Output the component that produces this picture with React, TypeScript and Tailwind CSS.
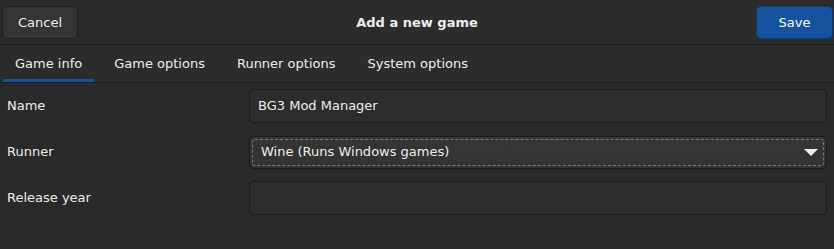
const tabs = ["Game info", "Game options", "Runner options", "System options"]

const App = () => {
  return (
    <div className="w-[834px] h-[249px] bg-[#2a2a2a] text-[#eeeeec] text-[13px] overflow-hidden" style={{ fontFamily: '"DejaVu Sans", sans-serif' }}>
      {/* header bar */}
      <div className="h-[45px] flex flex-row items-center justify-between pl-[2px] pr-[1px] pt-[1px] bg-[#2c2c2c] border-b border-[#1b1b1b] relative">
        <button className="w-[76px] h-[33px] rounded-[5px] bg-[#353535] border border-[#1f1f1f] text-[#eeeeec]">Cancel</button>
        <p className="absolute left-0 right-0 text-center font-bold pointer-events-none">Add a new game</p>
        <button className="w-[77px] h-[33px] rounded-[5px] bg-[#15539e] border border-[#0f3b70] text-white">Save</button>
      </div>

      {/* tabs */}
      <div className="h-[38px] flex flex-row gap-2 pl-[3px] bg-[#2c2c2c] border-b border-[#1e1e1e]">
        {tabs.map((t, i) => (
          <div key={t} className={"px-3 flex items-center " + (i === 0 ? "border-b-[3px] border-[#15539e] pt-[3px]" : "")}>
            <p className="text-[#eeeeec]">{t}</p>
          </div>
        ))}
      </div>

      {/* form */}
      <div className="flex flex-col gap-3 pt-[6px] pl-[7px] pr-[7px]">
        <div className="flex flex-row items-center h-[34px]">
          <p className="w-[242px]">Name</p>
          <div className="flex-1 h-full rounded-[5px] bg-[#2d2d2d] border border-[#1c1c1c] flex items-center px-2">
            <p>BG3 Mod Manager</p>
          </div>
        </div>

        <div className="flex flex-row items-center h-[34px]">
          <p className="w-[242px]">Runner</p>
          <div className="flex-1 h-[33px] rounded-[5px] bg-gradient-to-b from-[#363636] to-[#323232] border border-[#1b1b1b] p-[2px]">
            <div className="h-full rounded-[3px] border border-dashed border-[#7a7a7a] flex items-center justify-between pl-[8px] pr-[5px]">
              <p>Wine (Runs Windows games)</p>
              <svg width="14" height="7" viewBox="0 0 14 7">
                <path d="M0 0 L14 0 L7 7 Z" fill="#eeeeec" />
              </svg>
            </div>
          </div>
        </div>

        <div className="flex flex-row items-center h-[34px]">
          <p className="w-[242px]">Release year</p>
          <div className="flex-1 h-full rounded-[5px] bg-[#2d2d2d] border border-[#1c1c1c]"></div>
        </div>
      </div>
    </div>
  )
}

export default App
